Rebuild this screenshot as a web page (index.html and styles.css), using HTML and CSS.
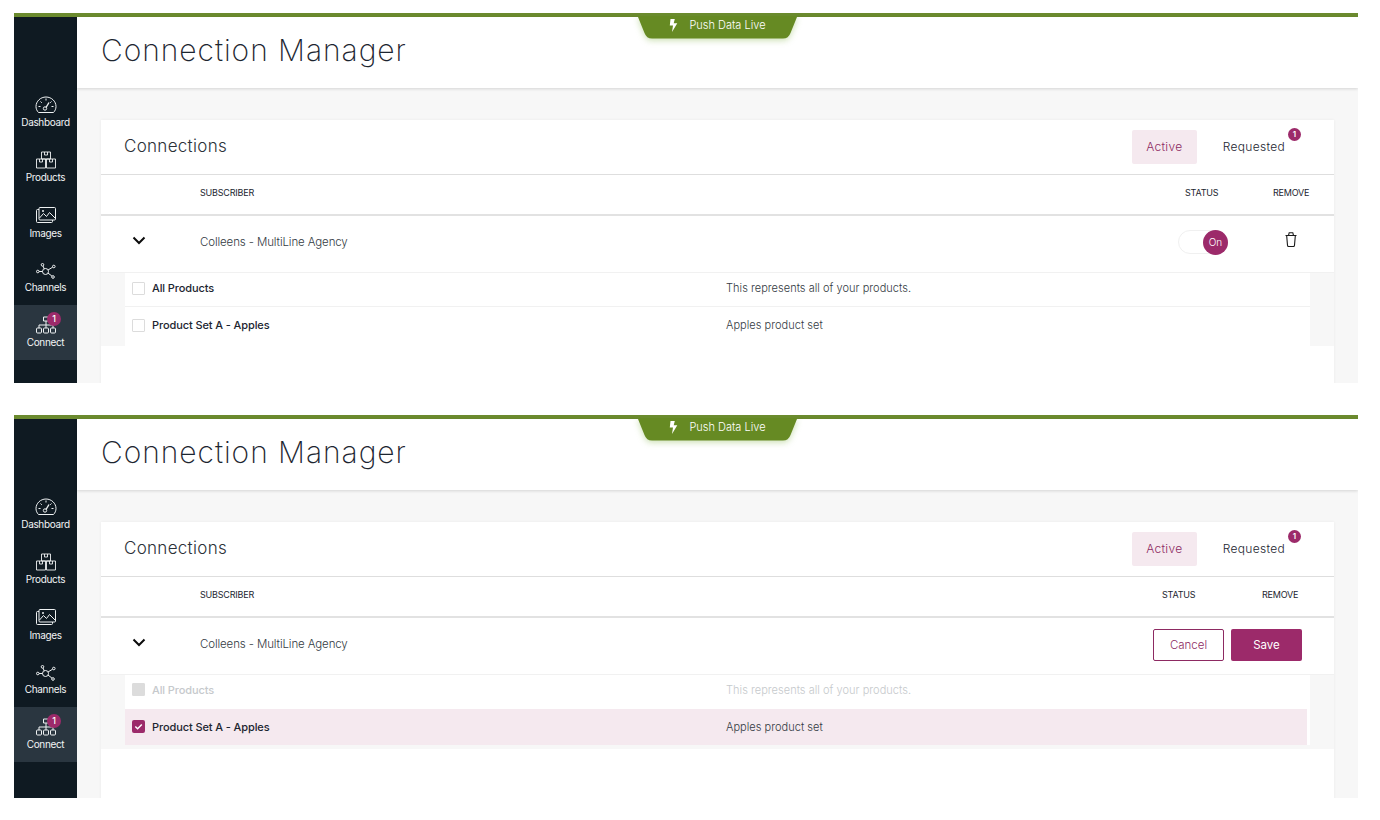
FILE: index.html
```html
<!DOCTYPE html>
<html lang="en">
<head>
<meta charset="utf-8">
<title>Connection Manager</title>
<link rel="stylesheet" href="styles.css">
</head>
<body>
<svg class="defs" width="0" height="0">
  <symbol id="i-dash" viewBox="0 0 22 18"><path d="M3.5 16.5C2 15 1 12.800 1 10.500 1 5.300 5.500 1 11 1s10 4.300 10 9.500c0 2.300-1 4.500-2.500 6z" fill="none" stroke="currentColor"/><path d="M11 2.500v2M3.500 10.500h2M16.500 10.500h2M5.500 5.500l1.300 1.300M16.500 5.500l-1.300 1.300" stroke="currentColor" fill="none"/><circle cx="10" cy="12.500" r="1.700" fill="none" stroke="currentColor"/><path d="M11 11.500l3-5" stroke="currentColor" stroke-width="1.400"/></symbol>
  <symbol id="i-prod" viewBox="0 0 20 18"><path d="M.5 8h9v9h-9zM10.500 8h9v9h-9zM5.500 1h9v7h-9zM3.500 8v3h3V8M13.500 8v3h3V8M8.500 1v3h3V1" fill="none" stroke="currentColor" stroke-width=".9"/></symbol>
  <symbol id="i-img" viewBox="0 0 20 17"><rect x=".5" y="2.500" width="16" height="13" rx="1" fill="none" stroke="currentColor"/><rect x="3" y=".5" width="16.500" height="12.500" rx="1" fill="#0f1a22" stroke="currentColor"/><path d="M3.500 11l4-4.500 3 3 3-4 5.500 5.500" fill="none" stroke="currentColor"/><circle cx="7" cy="4" r="1" fill="currentColor"/></symbol>
  <symbol id="i-chan" viewBox="0 0 20 16"><circle cx="9.500" cy="8.500" r="3" fill="none" stroke="currentColor"/><circle cx="6.500" cy="1.800" r="1.300" fill="none" stroke="currentColor"/><circle cx="17.800" cy="3.500" r="1.300" fill="none" stroke="currentColor"/><circle cx="1.800" cy="8.500" r="1.300" fill="none" stroke="currentColor"/><circle cx="17" cy="14" r="1.300" fill="none" stroke="currentColor"/><path d="M7 3l1.300 3M16.600 4.200L12 7M3.100 8.500h3.400M15.900 13l-4-3" stroke="currentColor" fill="none"/></symbol>
  <symbol id="i-conn" viewBox="0 0 20 18"><path d="M7.500 1h5v4h-5zM10 5v4M3 12V9h14v3M10 9v3" fill="none" stroke="currentColor"/><rect x=".5" y="12" width="5" height="5" rx="1" fill="none" stroke="currentColor"/><rect x="7.500" y="12" width="5" height="5" rx="1" fill="none" stroke="currentColor"/><rect x="14.500" y="12" width="5" height="5" rx="1" fill="none" stroke="currentColor"/></symbol>
  <symbol id="i-bolt" viewBox="0 0 9 13"><path d="M1.500 0h4.300L4.700 4.200H8.300L3 13l1-6.500H.8z" fill="currentColor"/></symbol>
  <symbol id="i-chev" viewBox="0 0 14 9"><path d="M1.500 1.500L7 7l5.500-5.500" fill="none" stroke="currentColor" stroke-width="2"/></symbol>
  <symbol id="i-trash" viewBox="0 0 12 15"><path d="M1.700 4l.8 9.300c0 .7.500 1.200 1.200 1.200h4.600c.7 0 1.200-.5 1.200-1.200L10.300 4M.5 3.500h11M3.500 3.500l.7-2.800h3.600l.7 2.800" fill="none" stroke="currentColor" stroke-width="1.100"/></symbol>
  <symbol id="i-tab" viewBox="0 0 159 23"><path d="M0 0H159V1L152.500 17Q150.500 22.500 145 22.500H14Q8.500 22.500 6.500 17L0 1Z" fill="currentColor"/></symbol>
</svg>

<section class="panel panel-a">
  <div class="topbar"></div>
  <div class="pushtab"><svg class="tabshape"><use href="#i-tab"/></svg><svg class="bolt"><use href="#i-bolt"/></svg><span class="pushlabel">Push Data Live</span></div>
  <div class="shell">
    <nav class="side">
      <a class="nav"><svg class="ni ni-dash"><use href="#i-dash"/></svg><span>Dashboard</span></a>
      <a class="nav"><svg class="ni ni-prod"><use href="#i-prod"/></svg><span>Products</span></a>
      <a class="nav"><svg class="ni ni-img"><use href="#i-img"/></svg><span>Images</span></a>
      <a class="nav"><svg class="ni ni-chan"><use href="#i-chan"/></svg><span>Channels</span></a>
      <a class="nav nav-on"><svg class="ni ni-conn"><use href="#i-conn"/></svg><b class="nbadge">1</b><span>Connect</span></a>
    </nav>
    <main class="main">
      <header class="head"><h1>Connection Manager</h1></header>
      <div class="content">
        <div class="card">
          <div class="card-head">
            <h2>Connections</h2>
            <div class="tabs"><span class="tab tab-on">Active</span><span class="tab">Requested<b class="tbadge">1</b></span></div>
          </div>
          <div class="cols"><span class="col-sub">SUBSCRIBER</span><span class="col-status">STATUS</span><span class="col-remove">REMOVE</span></div>
          <div class="row">
            <svg class="chev"><use href="#i-chev"/></svg>
            <span class="name">Colleens - MultiLine Agency</span>
            <div class="toggle"><span class="knob">On</span></div>
            <svg class="trash"><use href="#i-trash"/></svg>
          </div>
          <div class="subs">
            <div class="sub sub-line"><i class="check"></i><strong>All Products</strong><span>This represents all of your products.</span></div>
            <div class="sub"><i class="check"></i><strong>Product Set A - Apples</strong><span>Apples product set</span></div>
          </div>
        </div>
      </div>
    </main>
  </div>
</section>

<section class="panel panel-b">
  <div class="topbar"></div>
  <div class="pushtab"><svg class="tabshape"><use href="#i-tab"/></svg><svg class="bolt"><use href="#i-bolt"/></svg><span class="pushlabel">Push Data Live</span></div>
  <div class="shell">
    <nav class="side">
      <a class="nav"><svg class="ni ni-dash"><use href="#i-dash"/></svg><span>Dashboard</span></a>
      <a class="nav"><svg class="ni ni-prod"><use href="#i-prod"/></svg><span>Products</span></a>
      <a class="nav"><svg class="ni ni-img"><use href="#i-img"/></svg><span>Images</span></a>
      <a class="nav"><svg class="ni ni-chan"><use href="#i-chan"/></svg><span>Channels</span></a>
      <a class="nav nav-on"><svg class="ni ni-conn"><use href="#i-conn"/></svg><b class="nbadge">1</b><span>Connect</span></a>
    </nav>
    <main class="main">
      <header class="head"><h1>Connection Manager</h1></header>
      <div class="content">
        <div class="card">
          <div class="card-head">
            <h2>Connections</h2>
            <div class="tabs"><span class="tab tab-on">Active</span><span class="tab">Requested<b class="tbadge">1</b></span></div>
          </div>
          <div class="cols cols-edit"><span class="col-sub">SUBSCRIBER</span><span class="col-status">STATUS</span><span class="col-remove">REMOVE</span></div>
          <div class="row row-edit">
            <svg class="chev"><use href="#i-chev"/></svg>
            <span class="name">Colleens - MultiLine Agency</span>
            <button class="btn btn-cancel">Cancel</button>
            <button class="btn btn-save">Save</button>
          </div>
          <div class="subs subs-edit">
            <div class="sub sub-off"><i class="check check-off"></i><strong>All Products</strong><span>This represents all of your products.</span></div>
            <div class="sub sub-sel"><i class="check check-on"><svg viewBox="0 0 13 13"><path d="M3.300 6.500l2.300 2.300 4.200-4.300" fill="none" stroke="#fff" stroke-width="1.500"/></svg></i><strong>Product Set A - Apples</strong><span>Apples product set</span></div>
          </div>
        </div>
      </div>
    </main>
  </div>
</section>
</body>
</html>
```
FILE: styles.css
```css
* { box-sizing: border-box; }
html, body { margin: 0; background: #fff; }
body {
  padding: 13px 22px 0 14px;
  font-family: Inter, "Liberation Sans", sans-serif;
  color: #1c2530;
  overflow: hidden;
}
.defs { position: absolute; }
.panel { position: relative; display: flex; flex-direction: column; overflow: hidden; }
.panel-a { height: 370px; }
.panel-b { height: 383px; margin-top: 32px; }
.topbar { height: 4px; background: #6b8a2e; flex: none; }
.pushtab {
  position: absolute;
  left: 624px;
  top: 3px;
  width: 159px;
  height: 23px;
  padding: 0 0 5px 0;
  display: flex;
  align-items: center;
  justify-content: center;
  gap: 11px;
  color: #fff;
  font-size: 11px;
  font-weight: 300;
  z-index: 2;
}
.tabshape {
  position: absolute;
  left: 0;
  top: 0;
  width: 159px;
  height: 23px;
  color: #668a23;
  filter: drop-shadow(0 2px 3px rgba(110, 165, 40, .35));
  overflow: visible;
}
.bolt { position: relative; width: 9px; height: 13px; }
.pushlabel { position: relative; letter-spacing: 0; }
.shell { display: flex; flex: 1; min-height: 0; }
.side {
  width: 63px;
  flex: none;
  padding-top: 68px;
  background: #0f1a22;
  display: flex;
  flex-direction: column;
}
.nav {
  position: relative;
  height: 55px;
  padding-bottom: 2px;
  display: flex;
  flex-direction: column;
  align-items: center;
  justify-content: center;
  gap: 2px;
  color: #f2f4f5;
  font-size: 10px;
  letter-spacing: -.35px;
  font-weight: 400;
}
.nav span { line-height: 12px; }
.nav-on { background: #2a3640; }
.ni { display: block; color: #eef1f2; }
.ni-dash { width: 22px; height: 18px; }
.ni-prod { width: 20px; height: 18px; }
.ni-img { width: 20px; height: 17px; margin: 2px 0 1px; }
.ni-chan { width: 20px; height: 16px; margin-top: 2px; }
.ni-conn { width: 20px; height: 18px; }
.nbadge {
  position: absolute;
  left: 33px;
  top: 7px;
  width: 14px;
  height: 14px;
  border-radius: 50%;
  background: #9c2a6a;
  color: #fff;
  font-size: 9px;
  font-weight: 500;
  line-height: 14px;
  text-align: center;
}
.main { flex: 1; min-width: 0; background: #f7f7f7; display: flex; flex-direction: column; }
.head {
  height: 71px;
  flex: none;
  padding-left: 24px;
  background: #fff;
  box-shadow: 0 1px 3px rgba(0, 0, 0, .14);
}
h1 {
  margin: 0;
  padding-top: 14px;
  font-size: 30px;
  line-height: 38px;
  font-weight: 200;
  letter-spacing: .95px;
  color: #1c2530;
}
.content { flex: 1; padding: 32px 24px 0; min-height: 0; }
.card { background: #fff; height: 100%; min-height: 400px; box-shadow: 0 0 3px rgba(0, 0, 0, .06); }
.card-head {
  height: 55px;
  padding: 0 27px 0 23px;
  display: flex;
  align-items: center;
  justify-content: space-between;
  border-bottom: 1px solid #dedede;
}
h2 { margin: 0 0 2px; font-size: 17px; font-weight: 300; letter-spacing: .3px; color: #2b3138; }
.tabs { display: flex; gap: 2px; align-items: center; }
.tab {
  position: relative;
  height: 34px;
  padding: 0 22px 2px;
  display: flex;
  align-items: center;
  font-size: 12px;
  font-weight: 300;
  letter-spacing: .3px;
  color: #1c2530;
  border-radius: 2px;
}
.tab-on { width: 65px; padding: 0 0 2px; justify-content: center; background: #f5e9ef; color: #8d2a62; margin-right: 2px; }
.tbadge {
  position: absolute;
  right: 6px;
  top: -2px;
  width: 13px;
  height: 13px;
  border-radius: 50%;
  background: #9c2a6a;
  color: #fff;
  font-size: 8px;
  font-weight: 600;
  letter-spacing: 0;
  line-height: 13px;
  text-align: center;
}
.cols {
  height: 41px;
  padding: 0 0 4px 99px;
  display: flex;
  align-items: center;
  font-size: 9px;
  letter-spacing: -.2px;
  color: #1c2530;
  border-bottom: 2px solid #e2e2e2;
}
.col-sub { width: 985px; flex: none; }
.col-status { width: 88px; flex: none; }
.cols-edit .col-sub { width: 962px; }
.cols-edit .col-status { width: 100px; }
.row {
  height: 57px;
  padding: 0 0 2px 31px;
  display: flex;
  align-items: center;
  border-bottom: 1px solid #f1f1f1;
}
.chev { width: 14px; height: 9px; margin-top: -5px; color: #0c0c0c; flex: none; }
.name { margin: -2px 0 0 54px; width: 978px; flex: none; font-size: 11.500px; font-weight: 300; letter-spacing: -.12px; color: #333a42; }
.toggle {
  width: 50px;
  height: 24px;
  flex: none;
  margin-top: -2px;
  border: 1px solid #f0f0f0;
  border-radius: 12px;
  position: relative;
}
.knob {
  position: absolute;
  right: -1px;
  top: -1px;
  width: 25px;
  height: 25px;
  border-radius: 50%;
  background: #9c2a6a;
  color: #fff;
  font-size: 10px;
  font-weight: 300;
  line-height: 25px;
  text-align: center;
}
.trash { width: 12px; height: 15px; margin: -8px 0 0 57px; color: #1a1a1a; flex: none; }
.row-edit .name { width: 953px; }
.btn {
  height: 32px;
  border-radius: 2px;
  font-family: inherit;
  font-size: 11.500px;
  font-weight: 300;
  padding: 0;
}
.btn-cancel { width: 71px; background: #fff; color: #8d2a62; border: 1px solid #8d2a62; }
.btn-save { width: 71px; margin-left: 7px; background: #9c2a6a; color: #fff; border: 0; font-weight: 400; }
.subs { padding: 0 24px; background: #f7f7f7; height: 73px; }
.subs-edit { height: 74px; }
.sub {
  height: 34px;
  padding: 0 0 3px 7px;
  display: flex;
  align-items: center;
  background: #fff;
  font-size: 11px;
}
.sub + .sub { height: 39px; }
.subs-edit .sub + .sub { height: 36px; padding-bottom: 1px; }
.sub-line { border-bottom: 1px solid #f1f1f1; }
.sub-off { padding-bottom: 5px; }
.check {
  width: 13px;
  height: 13px;
  flex: none;
  border: 1px solid #dcdcdc;
  border-radius: 1px;
  background: #fff;
  display: block;
}
.check svg { display: block; width: 13px; height: 13px; }
.check-off { background: #dcdcdc; }
.check-on { background: #9c2a6a; border: 0; border-radius: 2px; }
.sub strong { width: 574px; margin-left: 7px; flex: none; font-weight: 500; letter-spacing: -.1px; color: #1c2530; }
.sub span { font-weight: 300; letter-spacing: .03px; color: #333a42; }
.sub-off strong, .sub-off span { color: #c6c9cc; }
.sub-sel { background: #f5e9ef; margin-right: 3px; box-shadow: 3px 0 0 #fff; }
```
